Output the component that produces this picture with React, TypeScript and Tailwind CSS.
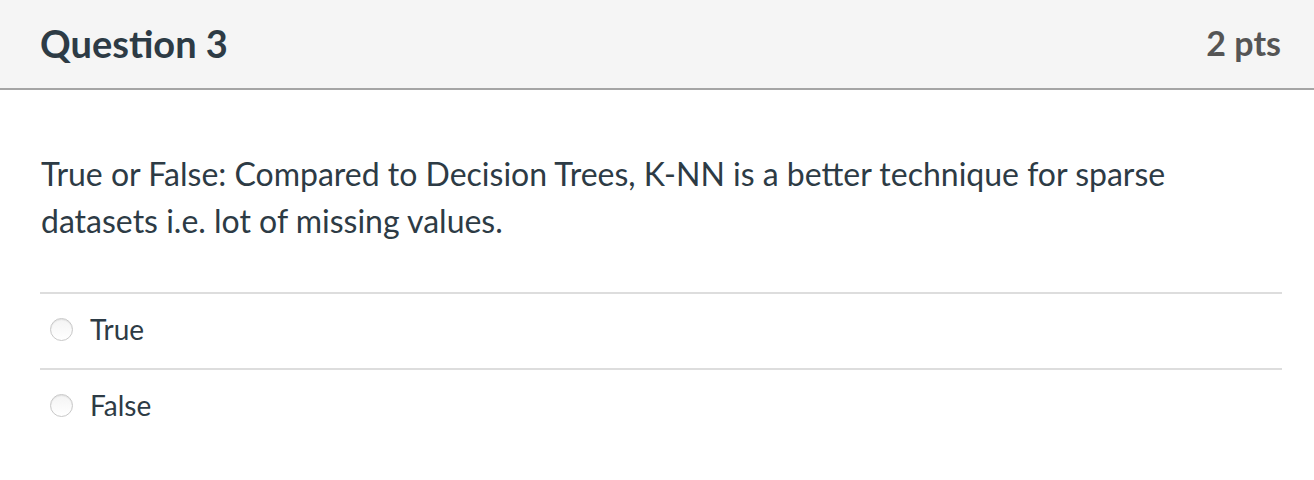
import React from "react";

function Radio() {
  return (
    <span className="inline-block w-[23px] h-[23px] rounded-full border border-[#c8c8c8] bg-gradient-to-b from-[#f4f4f4] to-white shadow-[inset_0_1px_1px_rgba(0,0,0,0.08)] shrink-0" />
  );
}

export default function App() {
  const answers = ["True", "False"];
  return (
    <div className="w-[1314px] h-[480px] bg-white text-[#2d3b45]" style={{ fontFamily: "Lato, 'Open Sans', sans-serif" }}>
      <div className="h-[90px] bg-[#f5f5f5] border-b-2 border-[#a5a5a5] flex items-center justify-between pl-[40px] pr-[33px] pb-[2px]">
        <span className="text-[38px] font-bold leading-none">Question 3</span>
        <span className="text-[34px] font-bold leading-none text-[#555555]">2 pts</span>
      </div>
      <div className="px-[40px] pt-[60px]">
        <p className="text-[32px] leading-[47px] pl-[1px] w-[1200px]">
          True or False: Compared to Decision Trees, K-NN is a better technique for sparse datasets i.e. lot of missing values.
        </p>
        <div className="mt-[48px] w-[1242px]">
          {answers.map((a) => (
            <div key={a} className="border-t-2 border-[#dddddd] h-[76px] flex items-center pl-[10px] gap-[17px] pb-[4px]">
              <Radio />
              <span className="text-[28px]">{a}</span>
            </div>
          ))}
        </div>
      </div>
    </div>
  );
}
